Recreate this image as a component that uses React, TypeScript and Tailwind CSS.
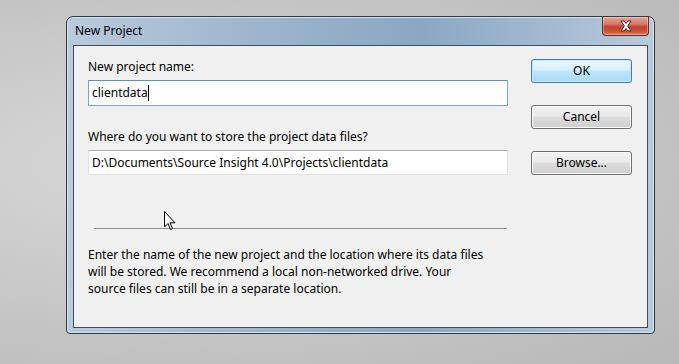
import React from "react";

const font = { fontFamily: '"Noto Sans", "Open Sans", sans-serif' };

function WinButton({ label, primary }: { label: string; primary?: boolean }) {
  return (
    <div
      className={
        "h-[24px] w-[101px] rounded-[3px] border flex items-center justify-center text-[12px] text-black " +
        (primary
          ? "border-[#3c7fb1] bg-[linear-gradient(#eaf6fd_0%,#d9f0fc_45%,#bee6fd_50%,#a7d9f5_100%)] shadow-[inset_0_0_0_1px_#c5e8fa]"
          : "border-[#707070] bg-[linear-gradient(#f2f2f2_0%,#ebebeb_45%,#dddddd_50%,#cfcfcf_100%)] shadow-[inset_0_0_0_1px_#fcfcfc]")
      }
    >
      {label}
    </div>
  );
}

export default function App() {
  return (
    <div
      className="relative w-[679px] h-[364px] overflow-hidden bg-[radial-gradient(ellipse_at_25%_45%,#d8d8d8_0%,#c6c6c6_55%,#b8b8b8_100%)] pl-[66px] pt-[16px]"
      style={font}
    >
      {/* Window */}
      <div className="relative w-[589px] h-[318px] rounded-t-[7px] rounded-b-[4px] border border-[#2f3a46] bg-[linear-gradient(90deg,#b9cbdc_0%,#9fb6cd_30%,#8ba7c2_60%,#a6bcd2_85%,#b9cbdb_100%)] flex flex-col px-[6px] pb-[5px] shadow-[inset_0_0_0_1px_#d6e2ee]">
        {/* Title bar */}
        <div className="h-[28px] flex items-center pl-[2px]">
          <span className="text-[12px] text-black leading-none">New Project</span>
        </div>
        {/* Close button */}
        <div className="absolute right-[5px] top-[0px] w-[47px] h-[19px] rounded-b-[4px] border border-t-0 border-[#6b2a20] bg-[linear-gradient(#e8a493_0%,#d5776a_40%,#c2402a_55%,#cf5a40_85%,#e07d62_100%)] flex items-center justify-center shadow-[inset_0_0_0_1px_rgba(255,255,255,0.35)]">
          <svg width="14" height="12" viewBox="0 0 14 12">
            <path
              d="M2 1 L5 1 L7 3.5 L9 1 L12 1 L8.7 6 L12 11 L9 11 L7 8.5 L5 11 L2 11 L5.3 6 Z"
              fill="#ffffff"
              stroke="#3a2a2a"
              strokeWidth="1"
              strokeLinejoin="round"
            />
          </svg>
        </div>
        {/* Client area */}
        <div className="flex-1 border border-[#3e4d5c] bg-[#f0f0f0] flex">
          {/* Left column */}
          <div className="w-[434px] pl-[14px] flex flex-col">
            <div className="mt-[13px] h-[16px] text-[12px] leading-[16px] text-black">New project name:</div>
            <div className="mt-[5px] h-[26px] w-[420px] border border-[#7aa6d3] border-t-[#5c8fc4] bg-white flex items-center pl-[3px] text-[12px] text-black">
              <span>clientdata</span>
              <span className="inline-block w-[1px] h-[16px] bg-black" />
            </div>
            <div className="mt-[23px] h-[16px] text-[12px] leading-[16px] text-black">
              Where do you want to store the project data files?
            </div>
            <div className="mt-[5px] h-[25px] w-[420px] border border-[#e3e3e3] border-t-[#abadb3] bg-white flex items-center pl-[3px] text-[12px] text-black">
              D:\Documents\Source Insight 4.0\Projects\clientdata
            </div>
            <div className="mt-[53px] ml-[6px] h-[1px] w-[413px] bg-[#8f8f8f]" />
            <div className="mt-[17px] w-[420px] text-[12px] leading-[17px] text-black whitespace-nowrap">
              Enter the name of the new project and the location where its data files
              <br />
              will be stored. We recommend a local non-networked drive. Your
              <br />
              source files can still be in a separate location.
            </div>
          </div>
          {/* Right column */}
          <div className="pl-[23px] pt-[13px] flex flex-col gap-[22px]">
            <WinButton label="OK" primary />
            <WinButton label="Cancel" />
            <WinButton label="Browse..." />
          </div>
        </div>
      </div>

      {/* Mouse cursor */}
      <svg className="absolute left-[164px] top-[211px]" width="13" height="20" viewBox="0 0 13 20">
        <path
          d="M0.5 0.5 L0.5 16 L4 12.5 L6.5 18.5 L8.5 17.6 L6 11.8 L11 11.8 Z"
          fill="#ffffff"
          stroke="#000000"
          strokeWidth="1"
          strokeLinejoin="miter"
        />
      </svg>
    </div>
  );
}
